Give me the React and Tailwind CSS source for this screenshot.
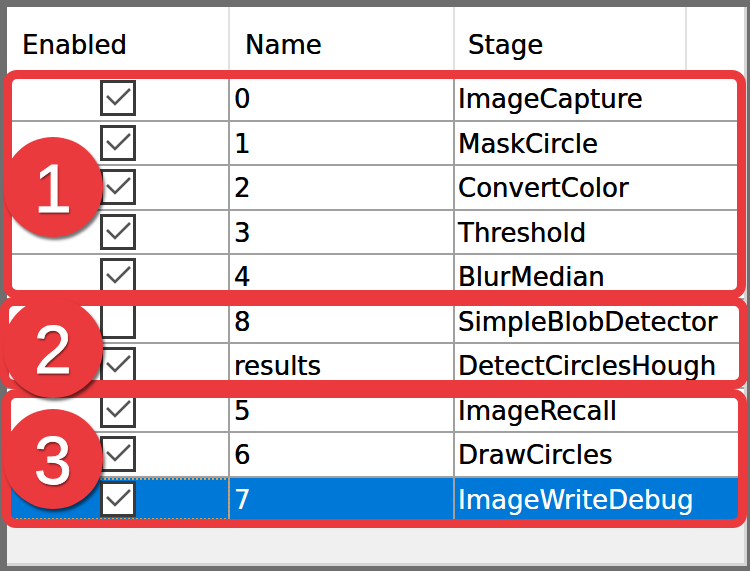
import React from "react";

const rows = [
  { on: true, name: "0", stage: "ImageCapture" },
  { on: true, name: "1", stage: "MaskCircle" },
  { on: true, name: "2", stage: "ConvertColor" },
  { on: true, name: "3", stage: "Threshold" },
  { on: true, name: "4", stage: "BlurMedian" },
  { on: false, name: "8", stage: "SimpleBlobDetector" },
  { on: true, name: "results", stage: "DetectCirclesHough" },
  { on: true, name: "5", stage: "ImageRecall" },
  { on: true, name: "6", stage: "DrawCircles" },
  { on: true, name: "7", stage: "ImageWriteDebug", sel: true },
];

function Check({ on }) {
  return (
    <div className="w-[36px] h-[36px] border-[3px] border-[#3a3a3a] bg-white relative">
      {on && (
        <svg className="absolute left-[-3px] top-[-3px]" width="36" height="36" viewBox="0 0 36 36">
          <polyline points="7,16 15,24 30,9" fill="none" stroke="#555" strokeWidth="2.6" />
        </svg>
      )}
    </div>
  );
}

function Badge({ n, top }) {
  return (
    <div
      className="absolute left-[3px] w-[100px] h-[100px] rounded-full bg-[#ea3a3e] flex items-center justify-center shadow-[2px_3px_3px_rgba(0,0,0,0.55)]"
      style={{ top }}
    >
      <span className="text-white text-[68px] leading-none font-['Liberation_Sans',Arial,sans-serif] [-webkit-text-stroke:0.8px_white] [text-shadow:1px_2px_2px_rgba(0,0,0,0.5)] mt-[2px]">
        {n}
      </span>
    </div>
  );
}

export default function App() {
  return (
    <div className="w-[750px] h-[571px] bg-[#6e6e6e] pt-[7px] pl-[7px] relative overflow-hidden font-['DejaVu_Sans',sans-serif] text-[26px] text-black [text-shadow:0_0_0.4px_currentColor]">
      <div className="w-[740px] h-[559px] bg-[#f0f0f0] border-r-[3px] border-b-[3px] border-[#d4d4d4] flex flex-col">
        <div className="h-[70px] bg-white flex shrink-0">
          <div className="w-[223px] border-r-2 border-[#e2e2e2] flex items-center pl-[15px] pt-[6px]">Enabled</div>
          <div className="w-[225px] border-r-2 border-[#e2e2e2] flex items-center pl-[15px] pt-[6px]">Name</div>
          <div className="w-[232px] border-r-2 border-[#e2e2e2] flex items-center pl-[13px] pt-[6px]">Stage</div>
          <div className="flex-1" />
        </div>
        {rows.map((r, i) => (
          <div
            key={i}
            className={
              "h-[44.5px] flex border-b-2 border-[#a0a0a0] shrink-0 " +
              (r.sel ? "bg-[#0078d7] text-white" : "bg-white")
            }
          >
            <div
              className={
                "w-[223px] border-r-2 border-[#a0a0a0] flex items-center justify-center relative " +
                (r.sel ? "outline-2 outline-dotted outline-[#e0a050] -outline-offset-2" : "")
              }
            >
              <Check on={r.on} />
            </div>
            <div className="w-[225px] border-r-2 border-[#a0a0a0] flex items-center pl-[4px] pt-[3px] whitespace-nowrap">{r.name}</div>
            <div className="flex-1 flex items-center pl-[3px] pt-[3px] whitespace-nowrap">{r.stage}</div>
          </div>
        ))}
      </div>

      <div className="absolute left-[3px] top-[70px] w-[743px] h-[229px] border-[9px] border-[#ea3a3e] rounded-[14px]" />
      <div className="absolute left-[0px] top-[297px] w-[748px] h-[92px] border-[9px] border-[#ea3a3e] rounded-[14px]" />
      <div className="absolute left-[2px] top-[389px] w-[745px] h-[139px] border-[9px] border-[#ea3a3e] rounded-[14px]" />

      <Badge n="1" top={137} />
      <Badge n="2" top={298} />
      <Badge n="3" top={409} />
    </div>
  );
}
